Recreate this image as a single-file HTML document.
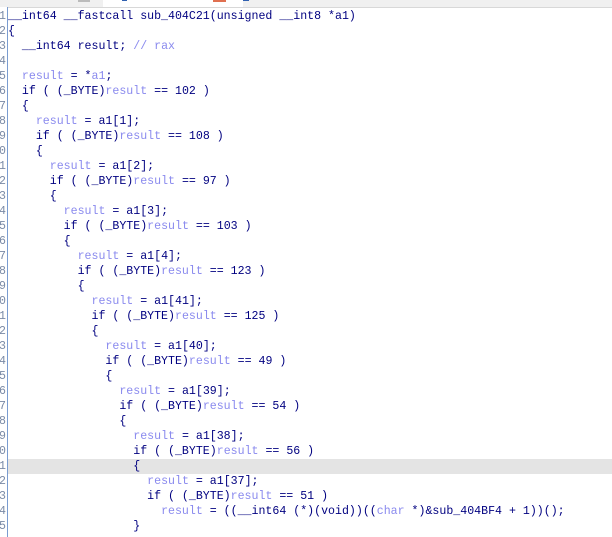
<!DOCTYPE html><html><head><style>
body{margin:0;width:612px;height:537px;overflow:hidden;background:#fff;position:relative;font-family:"Liberation Mono",monospace;font-size:11.6px}
.top{position:absolute;left:0;top:0;width:612px;height:7px;background:#f0f0f0;border-bottom:1px solid #d8d8d8}
.gut{position:absolute;left:0;top:7px;width:7px;height:530px;border-right:1px solid #7a9cd0;background:#fff}
.l{position:absolute;left:0;height:15px;line-height:15px;white-space:pre;color:#000080;width:612px}
.n{position:absolute;left:-1px;width:7px;overflow:hidden;color:#7a8aa6;text-align:right}
.c{position:absolute;left:8px}
.v{color:#8a8aee}
.hl{background:#e4e4e4}
</style></head><body>
<div class="top"><div style="position:absolute;left:78px;top:0;width:12px;height:2px;background:#bbb"></div><div style="position:absolute;left:103px;top:0;width:140px;height:7px;background:#fff"></div><div style="position:absolute;left:122px;top:0;width:5px;height:1px;background:#3060b0"></div><div style="position:absolute;left:213px;top:0;width:13px;height:2px;background:#e07050"></div><div style="position:absolute;left:243px;top:0;width:6px;height:1px;background:#3060b0"></div></div>
<div class="gut"></div>
<div id="code"></div>
<script>
var L=[
'__int64 __fastcall sub_404C21(unsigned __int8 *a1)',
'{',
'  __int64 result; <v>// rax</v>',
'',
'  <v>result</v> = *<v>a1</v>;',
'  if ( (_BYTE)<v>result</v> == 102 )',
'  {',
'    <v>result</v> = a1[1];',
'    if ( (_BYTE)<v>result</v> == 108 )',
'    {',
'      <v>result</v> = a1[2];',
'      if ( (_BYTE)<v>result</v> == 97 )',
'      {',
'        <v>result</v> = a1[3];',
'        if ( (_BYTE)<v>result</v> == 103 )',
'        {',
'          <v>result</v> = a1[4];',
'          if ( (_BYTE)<v>result</v> == 123 )',
'          {',
'            <v>result</v> = a1[41];',
'            if ( (_BYTE)<v>result</v> == 125 )',
'            {',
'              <v>result</v> = a1[40];',
'              if ( (_BYTE)<v>result</v> == 49 )',
'              {',
'                <v>result</v> = a1[39];',
'                if ( (_BYTE)<v>result</v> == 54 )',
'                {',
'                  <v>result</v> = a1[38];',
'                  if ( (_BYTE)<v>result</v> == 56 )',
'                  {',
'                    <v>result</v> = a1[37];',
'                    if ( (_BYTE)<v>result</v> == 51 )',
'                      <v>result</v> = ((__int64 (*)(void))((<v>char</v> *)&amp;sub_404BF4 + 1))();',
'                  }'];
var h='';
for(var i=0;i<L.length;i++){
 var t=L[i].replace(/<v>/g,'<span class="v">').replace(/<\/v>/g,'</span>');
 var y=9+i*15;
 h+='<div class="l" style="top:'+y+'px"><span class="n">'+((i+1)%10)+'</span>'+(i==30?'<div class="hl" style="position:absolute;left:8px;top:0;width:604px;height:15px"></div>':'')+'<span class="c">'+t+'</span></div>';
}
document.getElementById('code').innerHTML=h;
</script>
</body></html>
